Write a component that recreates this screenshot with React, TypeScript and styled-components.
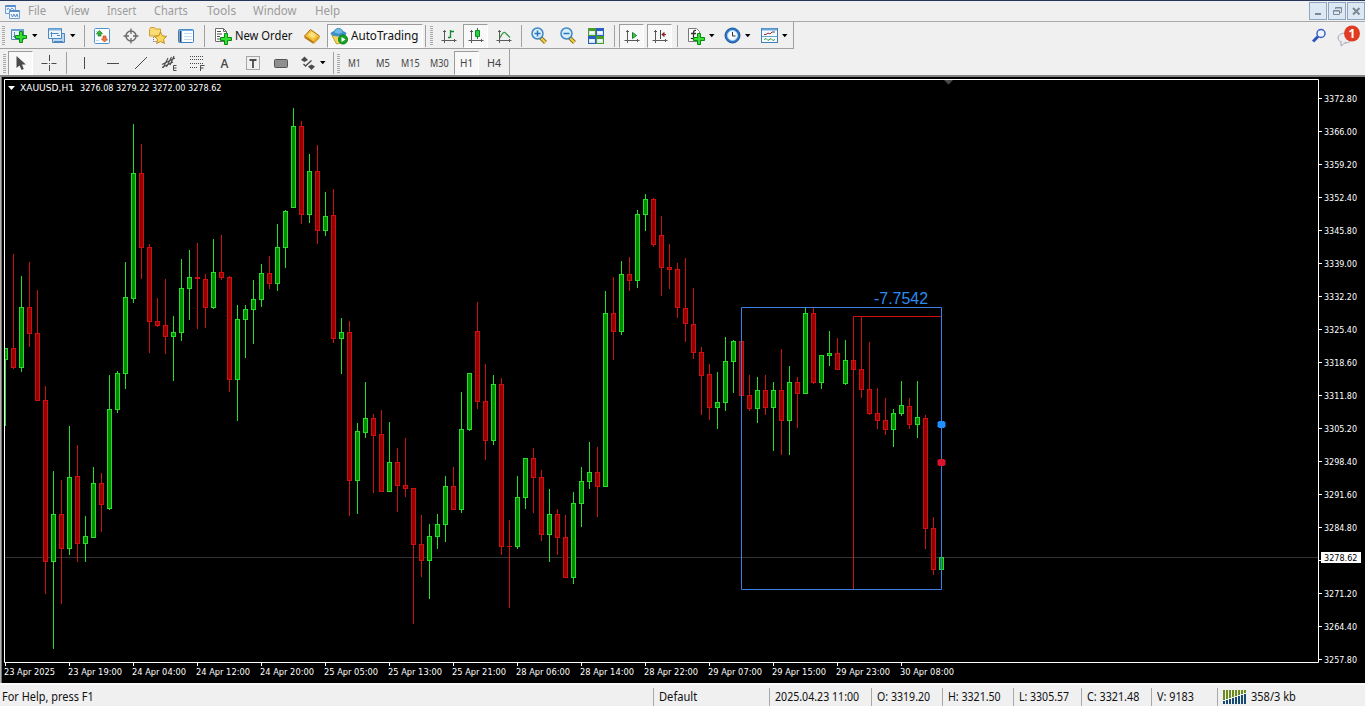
import { useLayoutEffect, useRef, useState } from "react";
import type { ReactNode } from "react";
import styled, { createGlobalStyle, css } from "styled-components";

const GlobalStyle = createGlobalStyle`
  * {
    box-sizing: border-box;
  }

  body {
    margin: 0;
    background: #f0f0f0;
    overflow: hidden;
  }
`;

// one candle every 8px: [high, body top, body bottom, low, rising]
const candles: [number, number, number, number, number][] = [
  [348, 348, 360, 426, 1], [254, 348, 368, 369, 0], [276, 307, 368, 372, 1],
  [262, 307, 334, 347, 0], [290, 333, 401, 401, 0], [386, 400, 562, 594, 0],
  [471, 514, 562, 649, 1], [480, 514, 549, 604, 0], [426, 477, 549, 555, 1],
  [445, 476, 544, 562, 0], [516, 536, 544, 562, 1], [467, 483, 538, 538, 1],
  [473, 483, 505, 532, 0], [375, 409, 509, 510, 1], [371, 373, 410, 413, 1],
  [262, 297, 374, 389, 1], [124, 173, 299, 303, 1], [144, 173, 248, 279, 0],
  [244, 247, 322, 353, 0], [298, 321, 326, 327, 0], [279, 325, 337, 354, 0],
  [316, 332, 337, 381, 1], [259, 288, 333, 341, 1], [250, 277, 289, 320, 1],
  [243, 277, 279, 329, 0], [274, 279, 308, 328, 0], [239, 272, 308, 309, 1],
  [235, 272, 278, 280, 0], [276, 277, 380, 392, 0], [305, 319, 380, 421, 1],
  [305, 309, 320, 358, 1], [280, 299, 310, 344, 1], [264, 273, 300, 307, 1],
  [256, 273, 284, 289, 0], [224, 247, 284, 291, 1], [210, 211, 248, 268, 1],
  [108, 126, 208, 208, 1], [121, 126, 215, 224, 0], [154, 171, 215, 223, 1],
  [145, 171, 231, 244, 0], [192, 216, 231, 236, 1], [189, 215, 339, 343, 0],
  [318, 332, 339, 374, 1], [321, 332, 481, 516, 0], [423, 431, 481, 514, 1],
  [382, 418, 433, 438, 1], [414, 418, 436, 493, 0], [410, 434, 492, 492, 0],
  [422, 462, 492, 492, 1], [448, 462, 486, 512, 0], [438, 485, 489, 497, 0],
  [488, 488, 545, 624, 0], [515, 544, 561, 577, 0], [524, 536, 561, 599, 1],
  [514, 524, 537, 549, 1], [476, 486, 525, 542, 1], [467, 486, 510, 510, 0],
  [392, 429, 510, 513, 1], [373, 373, 430, 431, 1], [302, 331, 402, 409, 0],
  [364, 401, 441, 460, 0], [375, 384, 441, 445, 1], [378, 384, 547, 555, 0],
  [520, 546, 547, 608, 0], [476, 497, 547, 549, 1], [458, 458, 498, 509, 1],
  [448, 458, 478, 513, 0], [470, 477, 535, 541, 0], [489, 514, 535, 562, 1],
  [509, 514, 538, 555, 0], [515, 537, 578, 578, 0], [492, 503, 578, 584, 1],
  [467, 481, 504, 527, 1], [442, 472, 482, 489, 1], [447, 472, 487, 517, 0],
  [291, 313, 487, 487, 1], [277, 313, 332, 360, 0], [261, 274, 332, 335, 1],
  [257, 274, 281, 291, 0], [210, 214, 281, 288, 1], [194, 199, 215, 231, 1],
  [198, 199, 245, 247, 0], [216, 235, 268, 296, 0], [244, 267, 270, 289, 0],
  [263, 269, 308, 318, 0], [258, 308, 324, 342, 0], [288, 324, 353, 359, 0],
  [347, 352, 376, 415, 0], [364, 374, 408, 420, 0], [372, 402, 408, 429, 1],
  [337, 361, 403, 411, 1], [340, 341, 362, 393, 1], [341, 341, 396, 396, 0],
  [375, 395, 409, 411, 0], [377, 390, 409, 423, 1], [375, 390, 408, 415, 0],
  [382, 390, 408, 451, 1], [349, 390, 421, 455, 0], [366, 382, 421, 455, 1],
  [377, 382, 394, 428, 0], [308, 313, 394, 394, 1], [308, 313, 383, 384, 0],
  [355, 355, 383, 389, 1], [331, 353, 356, 366, 1], [338, 353, 370, 370, 0],
  [340, 360, 384, 385, 1], [342, 360, 370, 376, 0], [316, 369, 390, 398, 0],
  [342, 389, 414, 415, 0], [388, 413, 421, 429, 0], [398, 420, 430, 435, 0],
  [409, 413, 430, 447, 1], [381, 405, 414, 416, 1], [398, 406, 425, 429, 0],
  [381, 417, 425, 438, 1], [415, 418, 529, 549, 0], [517, 528, 570, 575, 0],
  [557, 557, 570, 570, 1],
];

const times = [
  "23 Apr 2025", "23 Apr 19:00", "24 Apr 04:00", "24 Apr 12:00", "24 Apr 20:00",
  "25 Apr 05:00", "25 Apr 13:00", "25 Apr 21:00", "28 Apr 06:00", "28 Apr 14:00",
  "28 Apr 22:00", "29 Apr 07:00", "29 Apr 15:00", "29 Apr 23:00", "30 Apr 08:00",
];

// the empty slot sits under the current price tag
const prices = [
  "3372.80", "3366.00", "3359.20", "3352.40", "3345.80", "3339.00", "3332.20",
  "3325.40", "3318.60", "3311.80", "3305.20", "3298.40", "3291.60", "3284.80",
  "", "3271.20", "3264.40", "3257.80",
];

// stretches or squeezes a label to the given width
const FitText = ({ width, children }: { width: number; children: string }) => {
  const ref = useRef<HTMLSpanElement>(null);
  const [scale, setScale] = useState(1);

  useLayoutEffect(() => {
    if (ref.current) setScale(width / ref.current.offsetWidth);
  }, [width, children]);

  return (
    <FitBox $w={width}>
      <FitInner ref={ref} style={{ transform: `scaleX(${scale})` }}>
        {children}
      </FitInner>
    </FitBox>
  );
};

const FitBox = styled.span<{ $w: number }>`
  display: inline-block;
  flex: none;
  width: ${(p) => p.$w}px;
  white-space: pre;
`;

const FitInner = styled.span`
  display: inline-block;
  transform-origin: 0 50%;
`;

const Icon = ({ w = 16, children }: { w?: number; children: ReactNode }) => (
  <IconSvg width={w} height={w} viewBox={`0 0 ${w} ${w}`} fill="none">
    {children}
  </IconSvg>
);

const Caret = () => (
  <CaretSvg width="6" height="4" viewBox="0 0 6 4">
    <path d="M0 0h5.500L2.750 3.200z" fill="#000" />
  </CaretSvg>
);

const Plus = ({ x, y }: { x: number; y: number }) => (
  <path
    d={`M${x + 4.5} ${y + 0.5}h3v4h4v3h-4v4h-3v-4h-4v-3h4z`}
    fill="#34e034"
    stroke="#078c10"
  />
);

const Axes = () => (
  <path d="M3.5 2v13M0.5 12.5h15M2 3.5h3M13.5 11v3" stroke="#5a5a5a" />
);

const AppIcon = () => (
  <Icon w={15}>
    <path d="M.5 1.5h10v8H.5z" fill="#e8f2fb" stroke="#6f9dd0" />
    <path d="M.5 2h10" stroke="#5a8cc8" strokeWidth="2" />
    <path d="M2 6l1-2 2 2 2-2 2 2" stroke="#6f9dd0" />
    <path d="M4.500 6.500h10v8h-10z" fill="#f4f9fe" stroke="#6f9dd0" />
    <path d="M4.500 7h10" stroke="#5a8cc8" strokeWidth="2" />
    <path d="M6 10l1.500 3 1.500-3 1.500 3 1.500-3 1 3" stroke="#5a8cc8" />
  </Icon>
);

const NewChartIcon = () => (
  <Icon w={18}>
    <path d="M1.500 2.500h12v10h-12z" fill="#eaf4fc" stroke="#4a86b8" />
    <path d="M1 3h13" stroke="#6aa3d4" strokeWidth="2" />
    <path d="M4.500 5v6M3 9.500h7M10.500 5v4" stroke="#5a8fc0" />
    <Plus x={5} y={4} />
  </Icon>
);

const ProfilesIcon = () => (
  <Icon w={18}>
    <path d="M4.500 6.500h12v9h-12z" fill="#b8d6f0" stroke="#4d86bf" />
    <path d="M.5 1.500h13v10H.5z" fill="#eef6fd" stroke="#4d86bf" />
    <path d="M1 2.500h12" stroke="#7db0de" strokeWidth="2" />
    <path d="M3.500 5v5M2.500 6.500h8M9 8.500h3" stroke="#4d86bf" />
    <path d="M6 14.500h9" stroke="#4d86bf" />
  </Icon>
);

const MarketIcon = () => (
  <Icon>
    <rect x=".5" y=".5" width="15" height="15" rx="1" fill="#fbfdff" stroke="#4d94cf" />
    <path d="M2 3.500h2M2 6.500h1M12 12.500h2M2 12.500h3" stroke="#c3d6e6" />
    <path d="M5.500 2.500l3 3H7v2.500H4V5.500H2.500z" fill="#35b535" stroke="#16801a" strokeWidth=".7" />
    <path d="M10.500 14l-3-3H9V8h3v3h1.500z" fill="#f0793e" stroke="#c8401c" strokeWidth=".7" />
  </Icon>
);

const TargetIcon = () => (
  <Icon>
    <circle cx="8" cy="8" r="5" stroke="#6a6a6a" strokeWidth="1.500" />
    <path d="M8 .5v5.500M8 10v5.500M.5 8H6M10 8h5.500" stroke="#6a6a6a" strokeWidth="1.300" />
  </Icon>
);

const NavigatorIcon = () => (
  <Icon w={18}>
    <path d="M.5 2.500l1-2h4l1 1.500h5v7H.5z" fill="#f9dc78" stroke="#cf9f2c" />
    <path d="M4.500 10v5M4.500 14.500h4" stroke="#7a7a7a" strokeDasharray="1 1" />
    <path
      d="M11.500 5l1.900 3.900 4.200.5-3.100 2.900.9 4.200-3.900-2.100-3.800 2.100.8-4.200-3.100-2.900 4.200-.5z"
      fill="#fbd95a"
      stroke="#c08a1c"
    />
  </Icon>
);

const TerminalIcon = () => (
  <Icon>
    <rect x=".5" y="1.500" width="15" height="13" rx="1" fill="#fbfdff" stroke="#3d7fbf" />
    <path d="M1 2h14" stroke="#4d94d6" strokeWidth="1.500" />
    <path d="M2.500 3v11" stroke="#17406e" strokeWidth="2" />
    <path d="M6 5.500h8M6 8.500h8M6 11.500h8" stroke="#c3dbf0" />
  </Icon>
);

const OrderIcon = () => (
  <Icon w={18}>
    <path d="M1.500 1.500h8l3 3v10h-11z" fill="#fff" stroke="#6d6d6d" />
    <path d="M9.500 1.500v3h3" stroke="#6d6d6d" />
    <path d="M3 4.500h4M3 7h5M3 9.500h3M3 12h3" stroke="#4f4f4f" />
    <Plus x={6} y={6} />
  </Icon>
);

const GoldIcon = () => (
  <Icon>
    <path d="M.5 8L6.500 1.500 15.500 8 9.500 14.500z" fill="#f4c13a" stroke="#a4711a" />
    <path d="M.5 8v2l9 6v-2.500z" fill="#b97b17" />
    <path d="M9.500 13.500L15.500 8v2.500l-6 5.500z" fill="#dca024" />
    <path d="M4 7l3.500-3.500 5 3.500L9 10.500z" fill="#fde07c" />
  </Icon>
);

const AutoIcon = () => (
  <Icon w={18}>
    <path d="M2 8.500h13l-2.500 7-6 1.500z" fill="#f4d65c" stroke="#c89f2a" />
    <ellipse cx="8.500" cy="6.500" rx="8" ry="3" fill="#3f92c8" />
    <path d="M4 6c0-6 9-6 9 0-2 1.500-7 1.500-9 0z" fill="#6fbde6" stroke="#3888bc" />
    <circle cx="13" cy="12.500" r="4.500" fill="#16a526" stroke="#0c7a18" />
    <path d="M11.500 10v5l4-2.500z" fill="#fff" />
  </Icon>
);

const BarsIcon = () => (
  <Icon>
    <Axes />
    <path d="M9.500 2v8M7 9.500h2M10 3.500h3" stroke="#138a2a" strokeWidth="1.300" />
  </Icon>
);

const CandlesIcon = () => (
  <Icon>
    <Axes />
    <path d="M9.500 0v11" stroke="#138a2a" />
    <path d="M7.500 2.500h4v6h-4z" fill="#23d03c" stroke="#138a2a" />
  </Icon>
);

const LineIcon = () => (
  <Icon>
    <Axes />
    <path d="M4 10c2-5 4-7 6-4.500l4 4" stroke="#3f9a50" strokeWidth="1.300" />
  </Icon>
);

const ZoomIcon = ({ plus }: { plus?: boolean }) => (
  <Icon w={18}>
    <path d="M10.500 10.500l5 5" stroke="#94701c" strokeWidth="4" />
    <path d="M11 11l4.500 4.500" stroke="#f3d24c" strokeWidth="2" />
    <circle cx="7.500" cy="6.500" r="5.500" fill="#d8eefb" stroke="#3f86c4" strokeWidth="1.500" />
    <path d={plus ? "M4.500 6.500h6M7.500 3.500v6" : "M4.500 6.500h6"} stroke="#2b77bd" strokeWidth="1.500" />
  </Icon>
);

const TileIcon = () => (
  <Icon>
    <path d="M0 0h8v8H0zM8 8h8v8H8z" fill="#4c9c2c" />
    <path d="M8 0h8v8H8zM0 8h8v8H0z" fill="#2a5fc0" />
    <path d="M1 3h6v4H1zM9 3h6v4H9zM1 11h6v4H1zM9 11h6v4H9z" fill="#d5e8f4" />
    <path d="M2 4.500h4M10 4.500h4M2 12.500h4M10 12.500h4" stroke="#fff" strokeWidth="1.500" />
  </Icon>
);

const ScrollIcon = () => (
  <Icon>
    <Axes />
    <path d="M8.500 4.500v6l4-3z" fill="#3fc44f" stroke="#17852a" />
  </Icon>
);

const ShiftIcon = () => (
  <Icon>
    <Axes />
    <path d="M8.500 2v9" stroke="#484848" />
    <path d="M14 6.500h-4M12 4.500v4l-2-2z" fill="#a82020" stroke="#8e1c1c" />
  </Icon>
);

const IndicatorIcon = () => (
  <Icon w={18}>
    <path d="M1.500 1.500h8l3 3v10h-11z" fill="#fff" stroke="#7a7a7a" />
    <path d="M9 3.500C6.500 3 6.500 5 6.500 6v4.500C6.500 12 4.500 12 4 11M4 6.500h5" stroke="#333" strokeWidth="1.300" />
    <Plus x={6} y={6} />
  </Icon>
);

const ClockIcon = () => (
  <Icon w={17}>
    <circle cx="8.500" cy="8.500" r="7.500" fill="#2c78c4" stroke="#1b5699" />
    <circle cx="8.500" cy="8.500" r="5" fill="#f4f9fd" stroke="#a5cff0" />
    <path d="M8.500 5v4h3" stroke="#333" />
  </Icon>
);

const TemplateIcon = () => (
  <Icon w={17}>
    <rect x=".5" y="1.500" width="16" height="14" fill="#f8fcff" stroke="#3f80b8" />
    <path d="M1 2.500h15" stroke="#6aa8dc" strokeWidth="2" />
    <path d="M1 9.500h15" stroke="#6aa3d0" />
    <path d="M3 7.500h2l2-1.500 2 1 2-2h3" stroke="#8c3030" />
    <path d="M3 12.500l2-1 2 2 3-2 2 2 2-1" stroke="#2f9444" />
  </Icon>
);

const CursorIcon = () => (
  <Icon>
    <path d="M3.500 1v12l3-2.600L8.600 15l2.200-1L9 9.500h3.900z" fill="#4a4a4a" />
  </Icon>
);

const CrossIcon = () => (
  <Icon>
    <path d="M8.500 0v6M8.500 10v6M.5 8.500h6M10.500 8.500h5M8 8.500h1" stroke="#4a4a4a" />
  </Icon>
);

const ChannelIcon = () => (
  <Icon>
    <path d="M1 9.500L14 3M1 12.500L12 7M2 13L7 3M5.500 12l5-10M9 10l4-9" stroke="#4a4a4a" strokeWidth="1.100" />
    <path d="M15.500 10.500h-3v5h3M12.500 13h3" stroke="#4a4a4a" />
  </Icon>
);

const FiboIcon = () => (
  <Icon>
    <path d="M1 1.500h14M1 4.500h14M1 8.500h14M1 12.500h8" stroke="#4a4a4a" strokeDasharray="1 1" />
    <path d="M11.500 16v-5.500h4M11.500 13h3" stroke="#4a4a4a" />
  </Icon>
);

const TextLabelIcon = () => (
  <Icon>
    <rect x="1.500" y="1.500" width="13" height="13" stroke="#5a5a5a" strokeDasharray="1 1" />
    <path d="M4.500 5h7M8 4.500V13" stroke="#4a4a4a" strokeWidth="1.800" />
  </Icon>
);

const ArrowsIcon = () => (
  <Icon>
    <path d="M1 5l3.500-3.500L8 5 4.500 7z" fill="#4a4a4a" />
    <path d="M3.500 9l2 2 6-5.500" stroke="#4a4a4a" strokeWidth="1.300" />
    <path d="M8 11.500l3.500-2L15 11.500 11.500 15z" fill="#4a4a4a" />
  </Icon>
);

const SearchIcon = () => (
  <Icon w={15}>
    <path d="M6 8.500l-5 5" stroke="#2f50b8" strokeWidth="3" />
    <circle cx="9" cy="5.500" r="4" fill="#eef4ff" stroke="#3c5fc4" strokeWidth="1.500" />
  </Icon>
);

const Chart = () => (
  <ChartSvg viewBox="0 77 1365 606" width="1365" height="606">
    <rect x="0" y="77" width="1365" height="606" fill="#000" />
    <path d="M.5 77v606" stroke="#b5b5b5" />
    <path d="M1.500 77v606" stroke="#737373" />
    <path d="M5 557.500h1313" stroke="#333" />
    {candles.map(([high, top, bottom, low, up], i) => {
      const x = 5 + i * 8;
      const clip = i === 0 ? 2 : 0;
      return (
        <g key={i} fill={up ? "#28dc28" : "#d01010"}>
          <rect x={x} y={high} width="1" height={low - high} />
          <rect x={x - 2 + clip} y={top} width={5 - clip} height={bottom - top} />
          {bottom - top > 2 && (
            <rect
              x={x - 1 + (clip ? 1 : 0)}
              y={top + 1}
              width={clip ? 2 : 3}
              height={bottom - top - 2}
              fill={up ? "#008c00" : "#940000"}
            />
          )}
        </g>
      );
    })}
    <path d="M853.500 589V316.500H941" fill="none" stroke="#d01212" />
    <path d="M741.500 307.500h200v282h-200z" fill="none" stroke="#3a80e6" />
    <path d="M939 421h5l1.500 1.500v4l-1.500 1.500h-5l-1.500-1.500v-4z" fill="#1e90ff" />
    <path d="M939 459h5l1.500 1.500v4l-1.500 1.500h-5l-1.500-1.500v-4z" fill="#d8142c" />
    <path d="M4.500 79.500h1314v583h-1314z" fill="none" stroke="#fff" />
    <path d="M944 80h9l-4.500 4.500z" fill="#4a4a4a" />
    <path d="M8 86h7l-3.500 4z" fill="#fff" />
    <AxisText x="20" y="91" textLength="54" lengthAdjust="spacingAndGlyphs">
      XAUUSD,H1
    </AxisText>
    <AxisText x="80" y="91" textLength="141.500" lengthAdjust="spacingAndGlyphs">
      3276.08 3279.22 3272.00 3278.62
    </AxisText>
    <Reading x="874" y="304" textLength="54" lengthAdjust="spacingAndGlyphs">
      -7.7542
    </Reading>
    {prices.map((price, i) => (
      <g key={price}>
        <path d={`M1319 ${98.5 + i * 33}h3`} stroke="#fff" />
        {price && (
          <AxisText x="1324" y={102 + i * 33} textLength="33" lengthAdjust="spacingAndGlyphs">
            {price}
          </AxisText>
        )}
      </g>
    ))}
    <rect x="1321" y="552" width="40" height="11" fill="#fff" />
    <AxisText x="1324" y="561" textLength="33.500" lengthAdjust="spacingAndGlyphs" $dark>
      3278.62
    </AxisText>
    {times.map((time, i) => (
      <g key={time}>
        <path d={`M${5.5 + i * 64} 663v3`} stroke="#fff" />
        <AxisText x={4 + i * 64} y="675" textLength={i ? 54 : 51} lengthAdjust="spacingAndGlyphs">
          {time}
        </AxisText>
      </g>
    ))}
  </ChartSvg>
);

const menus: [string, number, number][] = [
  ["File", 18, 36],
  ["View", 25, 43],
  ["Insert", 29, 47],
  ["Charts", 34, 53],
  ["Tools", 29, 46],
  ["Window", 44, 62],
  ["Help", 25, 40],
];

const stats: [string, number, number][] = [
  ["Default", 38, 116],
  ["2025.04.23 11:00", 84, 102],
  ["O: 3319.20", 53, 71],
  ["H: 3321.50", 53, 71],
  ["L: 3305.57", 50, 68],
  ["C: 3321.48", 52, 70],
  ["V: 9183", 37, 66],
];

const App = () => (
  <Window>
    <GlobalStyle />
    <MenuBar>
      <AppIcon />
      <MenuList>
        {menus.map(([name, width, cell]) => (
          <MenuItem key={name} $w={cell}>
            <FitText width={width}>{name}</FitText>
          </MenuItem>
        ))}
      </MenuList>
      <Caption>
        <CaptionButton>
          <Icon><path d="M5 11h6" stroke="#7d8896" strokeWidth="2" /></Icon>
        </CaptionButton>
        <CaptionButton>
          <Icon>
            <path d="M6.500 6V4.500h6v5H11M6.500 5h6" stroke="#7d8896" />
            <path d="M4.500 7.500h6v4h-6zM4 8h7" stroke="#7d8896" />
          </Icon>
        </CaptionButton>
        <CaptionButton>
          <Icon><path d="M5 5l6.500 6.500M11.500 5L5 11.500" stroke="#7d8896" strokeWidth="2" /></Icon>
        </CaptionButton>
      </Caption>
    </MenuBar>

    <ToolRow>
      <Toolbar>
        <Grip $w={7} />
        <Cell $w={34}><NewChartIcon /><Caret /></Cell>
        <Cell $w={41}><ProfilesIcon /><Caret /></Cell>
        <Divider $w={5} />
        <Cell $w={30}><MarketIcon /></Cell>
        <Cell $w={27}><TargetIcon /></Cell>
        <Cell $w={28}><NavigatorIcon /></Cell>
        <Cell $w={28}><TerminalIcon /></Cell>
        <Divider $w={9} />
        <Cell $w={87}><OrderIcon /><FitText width={57}>New Order</FitText></Cell>
        <Cell $w={31}><GoldIcon /></Cell>
        <Cell $w={96} $pressed $start><AutoIcon /><FitText width={67}>AutoTrading</FitText></Cell>
        <Divider $w={5} />
        <Grip $w={6} />
        <Cell $w={29}><BarsIcon /></Cell>
        <Cell $w={25} $pressed><CandlesIcon /></Cell>
        <Cell $w={32}><LineIcon /></Cell>
        <Divider $w={3} />
        <Cell $w={31}><ZoomIcon plus /></Cell>
        <Cell $w={27}><ZoomIcon /></Cell>
        <Cell $w={29}><TileIcon /></Cell>
        <Divider $w={9} />
        <Cell $w={25} $pressed><ScrollIcon /></Cell>
        <Gap />
        <Cell $w={25} $pressed><ShiftIcon /></Cell>
        <Divider $w={11} />
        <Cell $w={35}><IndicatorIcon /><Caret /></Cell>
        <Cell $w={38}><ClockIcon /><Caret /></Cell>
        <Cell $w={37}><TemplateIcon /><Caret /></Cell>
      </Toolbar>
      <Side>
        <SearchIcon />
        <Notice width="26" height="22" viewBox="0 0 26 22">
          <ellipse cx="8" cy="13" rx="7" ry="5" fill="#ececf2" stroke="#a9a9b2" />
          <path d="M4 16v5l5-4" fill="#ececf2" stroke="#a9a9b2" />
          <circle cx="15" cy="8.500" r="8" fill="#e03c22" />
          <NoticeText x="15" y="13">1</NoticeText>
        </Notice>
      </Side>
    </ToolRow>

    <ToolRow $last>
      <Toolbar $low>
        <Grip $w={8} />
        <Cell $w={25} $pressed><CursorIcon /></Cell>
        <Cell $w={31}><CrossIcon /></Cell>
        <Divider $w={5} />
        <Cell $w={30}><Icon><path d="M8.500 2v12" stroke="#4a4a4a" /></Icon></Cell>
        <Cell $w={27}><Icon><path d="M2 8.500h12" stroke="#4a4a4a" /></Icon></Cell>
        <Cell $w={29}><Icon><path d="M2 14L14 2" stroke="#4a4a4a" /></Icon></Cell>
        <Cell $w={28}><ChannelIcon /></Cell>
        <Cell $w={27}><FiboIcon /></Cell>
        <Cell $w={29}><Letter>A</Letter></Cell>
        <Cell $w={28}><TextLabelIcon /></Cell>
        <Cell $w={27}>
          <Icon><rect x="1.500" y="4.500" width="13" height="8" rx="1" fill="#8f8f8f" stroke="#555" /></Icon>
        </Cell>
        <Cell $w={37}><ArrowsIcon /><Caret /></Cell>
        <Divider $w={4} />
        <Grip $w={6} />
        <Frame $w={27}><FitText width={13}>M1</FitText></Frame>
        <Frame $w={29}><FitText width={14}>M5</FitText></Frame>
        <Frame $w={27}><FitText width={19}>M15</FitText></Frame>
        <Frame $w={30}><FitText width={19}>M30</FitText></Frame>
        <Frame $w={25} $pressed><FitText width={13}>H1</FitText></Frame>
        <Frame $w={30}><FitText width={14}>H4</FitText></Frame>
      </Toolbar>
    </ToolRow>

    <Chart />

    <StatusBar>
      <Help><FitText width={92}>For Help, press F1</FitText></Help>
      {stats.map(([label, width, cell]) => (
        <Stat key={label} $w={cell}>
          <FitText width={width}>{label}</FitText>
        </Stat>
      ))}
      <Stat $w={147}>
        <TrafficSvg width="24" height="14" viewBox="0 0 24 14">
          {[0, 1, 2, 3, 4, 5, 6, 7].map((i) => (
            <g key={i}>
              <rect x={i * 3} y="0" width="2" height={10 - i} fill="#6f8a1c" />
              <rect x={i * 3} y={11 - i} width="2" height={3 + i} fill="#174a72" />
            </g>
          ))}
        </TrafficSvg>
        <FitText width={45}>358/3 kb</FitText>
      </Stat>
    </StatusBar>
  </Window>
);

const Window = styled.div`
  display: flex;
  flex-direction: column;
  width: 1365px;
  height: 706px;
  overflow: hidden;
  border-top: 1px solid #26355a;
  background: #f0f0f0;
  color: #111;
  font: 12px/16px "Noto Sans", "Open Sans", sans-serif;
`;

const MenuBar = styled.div`
  display: flex;
  align-items: center;
  flex: none;
  height: 21px;
  padding-left: 5px;
  border-bottom: 1px solid #a9a9a9;
  color: #9b9b9b;
`;

const MenuList = styled.div`
  display: flex;
  flex: 1;
  padding-left: 8px;
`;

const MenuItem = styled.div<{ $w: number }>`
  width: ${(p) => p.$w}px;
`;

const Caption = styled.div`
  display: flex;
  gap: 1px;
`;

const CaptionButton = styled.div`
  display: flex;
  align-items: center;
  justify-content: center;
  width: 18px;
  height: 18px;
  border: 1px solid #8ea4bf;
  background: #dce9f5;
`;

const ToolRow = styled.div<{ $last?: boolean }>`
  display: flex;
  justify-content: space-between;
  flex: none;
  height: ${(p) => (p.$last ? 28 : 27)}px;
  ${(p) =>
    p.$last &&
    css`
      border-bottom: 2px solid #858585;
    `}
`;

const Toolbar = styled.div<{ $low?: boolean }>`
  display: flex;
  align-items: center;
  border-right: 1px solid #a0a0a0;
  border-bottom: ${(p) => (p.$low ? "none" : "1px solid #a0a0a0")};
  padding-top: ${(p) => (p.$low ? 2 : 1)}px;
`;

const Cell = styled.div<{ $w: number; $pressed?: boolean; $start?: boolean }>`
  display: flex;
  align-items: center;
  justify-content: ${(p) => (p.$start ? "flex-start" : "center")};
  flex: none;
  gap: 3px;
  width: ${(p) => p.$w}px;
  height: 24px;
  padding-left: ${(p) => (p.$start ? 2 : 0)}px;
  ${(p) =>
    p.$pressed &&
    css`
      border: 1px solid #fff;
      border-top-color: #9c9c9c;
      border-left-color: #9c9c9c;
      background: #f8f8f8;
    `}
`;

const Frame = styled(Cell)`
  color: #444;
  font-size: 10px;
`;

const Gap = styled.div`
  width: 3px;
`;

const Divider = styled.div<{ $w: number }>`
  display: flex;
  justify-content: center;
  flex: none;
  width: ${(p) => p.$w}px;
  height: 22px;

  &::before {
    content: "";
    width: 1px;
    background: #a0a0a0;
  }
`;

const Grip = styled.div<{ $w: number }>`
  display: flex;
  justify-content: center;
  flex: none;
  width: ${(p) => p.$w}px;
  height: 19px;

  &::before {
    content: "";
    width: 3px;
    background: repeating-linear-gradient(#a8a8a8 0 1px, #f0f0f0 1px 2px);
  }
`;

const IconSvg = styled.svg`
  flex: none;
`;

const CaretSvg = styled.svg`
  flex: none;
  margin-left: 1px;
`;

const Letter = styled.span`
  color: #4a4a4a;
  font: 600 12px "Open Sans", sans-serif;
`;

const Side = styled.div`
  display: flex;
  align-items: center;
  gap: 10px;
  padding-right: 2px;
`;

const Notice = styled.svg`
  flex: none;
`;

const NoticeText = styled.text`
  fill: #fff;
  font: bold 12px "Noto Sans", sans-serif;
  text-anchor: middle;
`;

const ChartSvg = styled.svg`
  display: block;
  flex: none;
`;

const AxisText = styled.text<{ $dark?: boolean }>`
  fill: ${(p) => (p.$dark ? "#000" : "#fff")};
  font: 9.5px "DejaVu Sans Condensed", "DejaVu Sans", sans-serif;
`;

const Reading = styled.text`
  fill: #2b8cf0;
  font: 16px "Liberation Sans", Arial, sans-serif;
`;

const StatusBar = styled.div`
  display: flex;
  align-items: center;
  flex: 1;
  border-top: 2px solid #fafafa;
  padding-top: 2px;
`;

const Help = styled.div`
  width: 653px;
  padding-left: 2px;
`;

const Stat = styled.div<{ $w: number }>`
  display: flex;
  align-items: center;
  flex: none;
  gap: 4px;
  width: ${(p) => p.$w}px;
  height: 18px;
  padding-left: 5px;
  border-left: 1px solid #a8a8a8;
`;

const TrafficSvg = styled.svg`
  flex: none;
`;

export default App;
